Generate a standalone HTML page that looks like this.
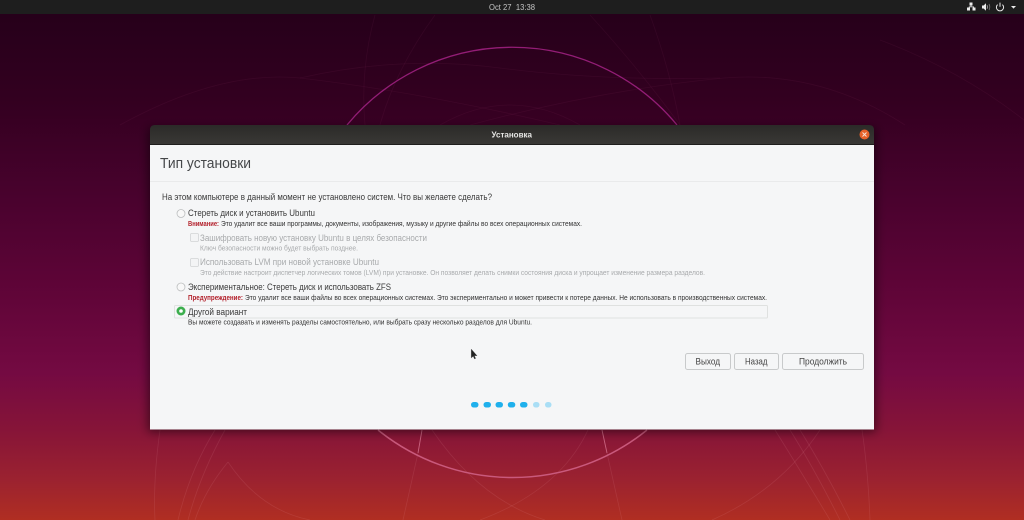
<!DOCTYPE html>
<html lang="ru">
<head>
<meta charset="utf-8">
<title>Установка</title>
<style>
html,body{margin:0;padding:0;width:1024px;height:520px;overflow:hidden;background:#2c001e}
svg{display:block}
text{font-family:"Liberation Sans","DejaVu Sans",sans-serif;white-space:pre}
</style>
</head>
<body>
<svg width="1024" height="520" viewBox="0 0 1024 520" xmlns="http://www.w3.org/2000/svg">
<defs>
<linearGradient id="bg" x1="0" y1="14" x2="0" y2="520" gradientUnits="userSpaceOnUse">
<stop offset="0" stop-color="#26001a"/>
<stop offset=".17" stop-color="#330020"/>
<stop offset=".37" stop-color="#4a022e"/>
<stop offset=".57" stop-color="#620539"/>
<stop offset=".71" stop-color="#740a42"/>
<stop offset=".82" stop-color="#861438"/>
<stop offset=".92" stop-color="#9b2230"/>
<stop offset="1" stop-color="#b02e22"/>
</linearGradient>
<linearGradient id="tb" x1="0" y1="0" x2="0" y2="1">
<stop offset="0" stop-color="#2b2a28"/><stop offset="1" stop-color="#3a3936"/>
</linearGradient>
<linearGradient id="btn" x1="0" y1="0" x2="0" y2="1">
<stop offset="0" stop-color="#f6f7f8"/><stop offset="1" stop-color="#e8eaec"/>
</linearGradient>
<filter id="sh" x="-10%" y="-10%" width="120%" height="125%"><feGaussianBlur stdDeviation="5"/></filter>
<filter id="soft" x="-2%" y="-2%" width="104%" height="104%"><feGaussianBlur stdDeviation=".38"/></filter>
<filter id="softer" x="-5%" y="-5%" width="110%" height="110%"><feGaussianBlur stdDeviation=".3"/></filter>
</defs>

<rect width="1024" height="520" fill="url(#bg)"/>

<!-- wallpaper lines -->
<g fill="none" stroke="#d85a9a" stroke-opacity=".07" stroke-width=".8">
<path d="M300 78Q400 55 500 68T720 78"/>
<path d="M300 78Q420 92 560 125"/>
<path d="M724 78Q600 90 470 125"/>
<path d="M375 15Q360 70 365 125"/>
<path d="M435 15Q395 70 380 125"/>
<path d="M590 15Q640 70 680 125"/>
<path d="M650 15Q670 70 680 125"/>
<path d="M440 125Q510 85 580 125"/>
<path d="M120 125Q220 70 300 78"/>
<path d="M724 78Q820 70 905 125"/>
<path d="M880 40Q960 70 1024 120"/>
</g>
<g fill="none" stroke="#f0a0a8" stroke-opacity=".13" stroke-width=".8">
<path d="M155 520Q153 480 160 430"/>
<path d="M178 520Q190 470 215 430"/>
<path d="M188 520Q200 475 225 430"/>
<path d="M195 520Q205 490 228 462"/>
<path d="M228 462Q260 510 310 520"/>
<path d="M418 453L403 520"/>
<path d="M607 453L622 520"/>
<path d="M432 430Q480 500 545 520"/>
<path d="M588 430Q560 490 480 520"/>
<path d="M712 520Q780 490 820 430"/>
<path d="M830 520Q800 470 775 430"/>
<path d="M840 520Q815 470 790 430"/>
<path d="M850 520Q825 470 800 430"/>
<path d="M870 520Q868 470 862 430"/>
</g>

<!-- main circle -->
<path d="M347 125A214 214 0 0 1 677 125" fill="none" stroke="#931d76" stroke-width="1.300"/>
<path d="M378 430A214 214 0 0 0 647 430" fill="none" stroke="#c9597c" stroke-width="1.500"/>
<path d="M422 430L418 453" stroke="#c9637f" stroke-width=".9" fill="none"/>
<path d="M602 430L607 453" stroke="#c9637f" stroke-width=".9" fill="none"/>

<!-- top bar -->
<rect width="1024" height="14" fill="#1e1e1e"/>
<text x="489" y="10" font-size="8.200" fill="#c4c4c4" textLength="46" lengthAdjust="spacingAndGlyphs" xml:space="preserve">Oct 27  13:38</text>
<g fill="#ececec">
<rect x="969.500" y="2.500" width="3" height="3"/>
<rect x="967" y="7.500" width="3" height="3"/>
<rect x="972.500" y="7.500" width="3" height="3"/>
<path d="M970.600 5.500h.8v1h2.600v1h-.8v-.3h-3.600v.3h-.8v-1h1.800z"/>
<path d="M982 5.500h1.600l2.400-2.200v7.400l-2.400-2.200H982z"/>
<path d="M987 5.200q1 1.800 0 3.600" fill="none" stroke="#9a9a9a" stroke-width=".9"/>
<path d="M989 4q1.600 3 0 6" fill="none" stroke="#777" stroke-width=".8"/>
<path d="M1011 6h5l-2.500 2.600z"/>
</g>
<path d="M997.600 4.600a3.600 3.600 0 1 0 4.800 0" fill="none" stroke="#ececec" stroke-width="1"/>
<path d="M1000 2.600v4.200" stroke="#ececec" stroke-width="1"/>

<!-- window shadow -->
<rect x="148" y="128" width="728" height="304" fill="#000" fill-opacity=".5" filter="url(#sh)"/>

<!-- window -->
<path d="M150 145v-15q0-5 5-5h714q5 0 5 5v15z" fill="url(#tb)"/>
<rect x="150" y="144.500" width="724" height="285" fill="#f5f6f7"/>
<rect x="150" y="144" width="724" height="1" fill="#1f1e1d"/>
<text x="491.500" y="137.500" font-size="8.600" font-weight="bold" fill="#e6e6e4" textLength="40.500" lengthAdjust="spacingAndGlyphs" filter="url(#softer)">Установка</text>
<circle cx="864.500" cy="134.500" r="5" fill="#e8622a"/>
<path d="M862.500 132.500l4 4m0-4l-4 4" stroke="#f8e0d4" stroke-width="1"/>

<text x="160" y="168" font-size="14.800" fill="#45474a" textLength="91" lengthAdjust="spacingAndGlyphs" filter="url(#softer)">Тип установки</text>
<rect x="150" y="181" width="724" height="1" fill="#e9eaeb"/>

<g filter="url(#soft)">
<text x="162" y="200" font-size="9" fill="#3a3a3a" textLength="330" lengthAdjust="spacingAndGlyphs">На этом компьютере в данный момент не установлено систем. Что вы желаете сделать?</text>

<text x="188" y="216" font-size="9" fill="#3a3a3a" textLength="127" lengthAdjust="spacingAndGlyphs">Стереть диск и установить Ubuntu</text>
<text x="188" y="226" font-size="7" font-weight="bold" fill="#b3202c" textLength="31" lengthAdjust="spacingAndGlyphs">Внимание:</text>
<text x="221" y="226" font-size="7.200" fill="#333" textLength="361" lengthAdjust="spacingAndGlyphs">Это удалит все ваши программы, документы, изображения, музыку и другие файлы во всех операционных системах.</text>

<text x="200" y="241" font-size="9" fill="#a8aaac" textLength="227" lengthAdjust="spacingAndGlyphs">Зашифровать новую установку Ubuntu в целях безопасности</text>
<text x="200" y="250.500" font-size="7.200" fill="#a8aaac" textLength="158" lengthAdjust="spacingAndGlyphs">Ключ безопасности можно будет выбрать позднее.</text>

<text x="200" y="265" font-size="9" fill="#a8aaac" textLength="179" lengthAdjust="spacingAndGlyphs">Использовать LVM при новой установке Ubuntu</text>
<text x="200" y="275" font-size="7.200" fill="#a8aaac" textLength="505" lengthAdjust="spacingAndGlyphs">Это действие настроит диспетчер логических томов (LVM) при установке. Он позволяет делать снимки состояния диска и упрощает изменение размера разделов.</text>

<text x="188" y="290" font-size="9" fill="#3a3a3a" textLength="203" lengthAdjust="spacingAndGlyphs">Экспериментальное: Стереть диск и использовать ZFS</text>
<text x="188" y="300" font-size="7" font-weight="bold" fill="#b3202c" textLength="55" lengthAdjust="spacingAndGlyphs">Предупреждение:</text>
<text x="245" y="300" font-size="7.200" fill="#333" textLength="522" lengthAdjust="spacingAndGlyphs">Это удалит все ваши файлы во всех операционных системах. Это экспериментально и может привести к потере данных. Не использовать в производственных системах.</text>

<text x="188" y="315" font-size="9" fill="#3a3a3a" textLength="59" lengthAdjust="spacingAndGlyphs">Другой вариант</text>
<text x="188" y="324.500" font-size="7.200" fill="#333" textLength="344" lengthAdjust="spacingAndGlyphs">Вы можете создавать и изменять разделы самостоятельно, или выбрать сразу несколько разделов для Ubuntu.</text>

<text x="695.500" y="364.500" font-size="9" fill="#444" textLength="24.500" lengthAdjust="spacingAndGlyphs">Выход</text>
<text x="745" y="364.500" font-size="9" fill="#444" textLength="22.500" lengthAdjust="spacingAndGlyphs">Назад</text>
<text x="799" y="364.500" font-size="9" fill="#444" textLength="48" lengthAdjust="spacingAndGlyphs">Продолжить</text>
</g>

<!-- focus box -->
<rect x="174.500" y="305.500" width="593" height="12.500" rx="1" fill="none" stroke="#dfe1e0" stroke-width="1"/>

<!-- radios -->
<circle cx="181" cy="213.500" r="4" fill="#f8f8f8" stroke="#bcbebf" stroke-width=".8"/>
<circle cx="181" cy="287" r="4" fill="#f8f8f8" stroke="#bcbebf" stroke-width=".8"/>
<circle cx="181" cy="311" r="4.500" fill="#3cae4e"/>
<circle cx="181" cy="311" r="1.800" fill="#fff"/>

<!-- checkboxes -->
<rect x="190.500" y="233.500" width="8" height="8" rx="1.200" fill="#f3f4f5" stroke="#d2d4d5" stroke-width=".8"/>
<rect x="190.500" y="258.500" width="8" height="8" rx="1.200" fill="#f3f4f5" stroke="#d2d4d5" stroke-width=".8"/>


<g fill="none" stroke="#c8cacb">
<rect x="685.500" y="353.500" width="45" height="16" rx="2"/>
<rect x="734.500" y="353.500" width="44" height="16" rx="2"/>
<rect x="782.500" y="353.500" width="81" height="16" rx="2"/>
</g>

<!-- progress dots -->
<g fill="#1fb0ec">
<rect x="471" y="402" width="7.500" height="5.500" rx="2.700"/>
<rect x="483.500" y="402" width="7.500" height="5.500" rx="2.700"/>
<rect x="495.500" y="402" width="7.500" height="5.500" rx="2.700"/>
<rect x="507.800" y="402" width="7.500" height="5.500" rx="2.700"/>
<rect x="520" y="402" width="7.500" height="5.500" rx="2.700"/>
</g>
<g fill="#a9def5">
<rect x="533" y="402" width="6.500" height="5.500" rx="2.700"/>
<rect x="545" y="402" width="6.500" height="5.500" rx="2.700"/>
</g>

<!-- cursor -->
<path d="M471.200 349v9l2-1.800 1.300 2.800 1.200-.6-1.300-2.700h2.700z" fill="#222" stroke="#555" stroke-width=".3"/>
</svg>
</body>
</html>
